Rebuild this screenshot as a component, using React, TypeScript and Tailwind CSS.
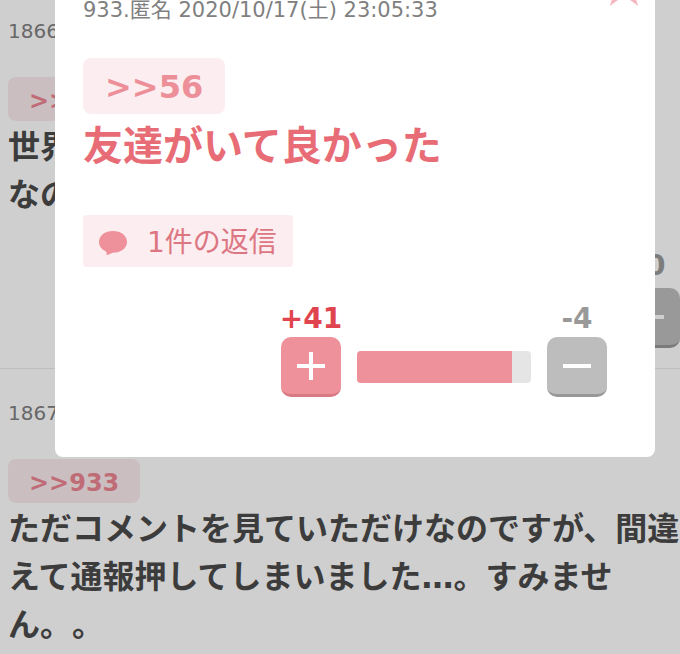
type Post = {
  id: number;
  anchor: string;
  lines: string[];
  votes?: { minus: number };
};

const posts: Post[] = [
  { id: 1866, anchor: '>>932', lines: ['世界', 'なの'], votes: { minus: 0 } },
  {
    id: 1867,
    anchor: '>>933',
    lines: ['ただコメントを見ていただけなのですが、間違えて通報押してしまいました…。すみません。。'],
  },
];

function VoteButton({ kind }: { kind: 'plus' | 'minus' }) {
  const color = kind === 'plus' ? 'bg-[#ef919b] border-[#d97984]' : 'bg-[#bdbdbd] border-[#989898]';

  return (
    <button
      type="button"
      aria-label={kind === 'plus' ? 'プラス' : 'マイナス'}
      className={`flex h-[60px] w-[60px] items-center justify-center rounded-[10px] border-b-[3px] ${color}`}
    >
      <svg viewBox="0 0 28 28" className="h-7 w-7" stroke="#fff" strokeWidth="4">
        <path d="M0 14H28" />
        {kind === 'plus' && <path d="M14 0V28" />}
      </svg>
    </button>
  );
}

function PostItem({ post }: { post: Post }) {
  return (
    <article className="border-b border-[#ebebeb] pt-7 pb-5 pl-2">
      <p className="text-[20px] leading-8 text-[#808080]">{post.id}</p>
      <a
        href="#"
        className="mt-[30px] inline-flex h-11 items-center rounded-lg bg-[#fbebee] px-[21px] pt-1 align-top text-[24px] leading-9 font-bold text-[#ec8592]"
      >
        {post.anchor}
      </a>
      <div className="mt-0.5 min-h-24 text-[32px] leading-[48px] font-bold text-[#4a4a4a] [text-spacing-trim:space-all]">
        {post.lines.map((line) => (
          <p key={line}>{line}</p>
        ))}
      </div>
      {post.votes && (
        <div className="mt-[29px] flex justify-end">
          <div className="flex flex-col items-center gap-1">
            <span className="text-[28px] leading-9 font-bold text-[#999]">-{post.votes.minus}</span>
            <VoteButton kind="minus" />
          </div>
        </div>
      )}
    </article>
  );
}

function CommentModal() {
  return (
    <section
      role="dialog"
      aria-label="コメント"
      className="mr-[25px] ml-[55px] overflow-hidden rounded-b-lg bg-white pr-12 pb-[60px] pl-7"
    >
      <header className="-mr-10 flex h-5 items-end justify-between">
        <p className="text-[21px] leading-5 whitespace-nowrap text-[#808080]">
          933.匿名 2020/10/17(土) 23:05:33
        </p>
        <button type="button" aria-label="お気に入り" className="mb-3.5 shrink-0">
          <svg viewBox="0 0 46 44" className="block h-11 w-[46px]" fill="#f5b8c0">
            <path d="M23 0l5.4 16.8H46L31.800 27.200 37.200 44 23 33.600 8.800 44l5.400-16.800L0 16.800h17.600z" />
          </svg>
        </button>
      </header>

      <a
        href="#"
        className="mt-[38px] inline-flex h-14 items-center rounded-lg bg-[#fcedf0] px-[22px] pt-0.5 align-top text-[32px] leading-10 font-bold text-[#ec8f99]"
      >
        &gt;&gt;56
      </a>
      <p className="mt-0.5 text-[40px] leading-[60px] font-bold text-[#e86c76]">友達がいて良かった</p>

      <button
        type="button"
        className="mt-[39px] flex h-[52px] items-center rounded bg-[#fcedf0] px-4 pt-1 text-[28px] leading-10 text-[#dc7682]"
      >
        <svg viewBox="0 0 28 24" className="mr-5 h-6 w-7" fill="#ef919b">
          <path d="M14 0C6 0 0 4.600 0 11c0 4 2.600 7.400 6.800 9.400.8.600 1.200 1.600.6 3.600 2 0 4.200-1.200 6-2.200 8 .2 14.600-4.400 14.600-10.800S22 0 14 0z" />
        </svg>
        1件の返信
      </button>

      <div className="mt-[34px] flex items-end justify-end gap-4">
        <div className="flex w-[60px] flex-col items-center">
          <span className="text-[28px] leading-9 font-bold text-[#e0454f]">+41</span>
          <VoteButton kind="plus" />
        </div>
        <div className="mb-3.5 h-8 w-[174px] overflow-hidden rounded bg-[#e5e5e5]">
          <div className="h-full bg-[#ef919b]" style={{ width: `${(41 / 46) * 100}%` }} />
        </div>
        <div className="flex w-[60px] flex-col items-center">
          <span className="text-[28px] leading-9 font-bold text-[#999]">-4</span>
          <VoteButton kind="minus" />
        </div>
      </div>
    </section>
  );
}

export default function App() {
  return (
    <div className="relative h-screen overflow-hidden bg-white font-['DejaVu_Sans','Noto_Sans_CJK_JP',sans-serif]">
      <main className="-mt-[13px]">
        {posts.map((post) => (
          <PostItem key={post.id} post={post} />
        ))}
      </main>
      <div className="absolute inset-0 bg-black/19">
        <CommentModal />
      </div>
    </div>
  );
}
